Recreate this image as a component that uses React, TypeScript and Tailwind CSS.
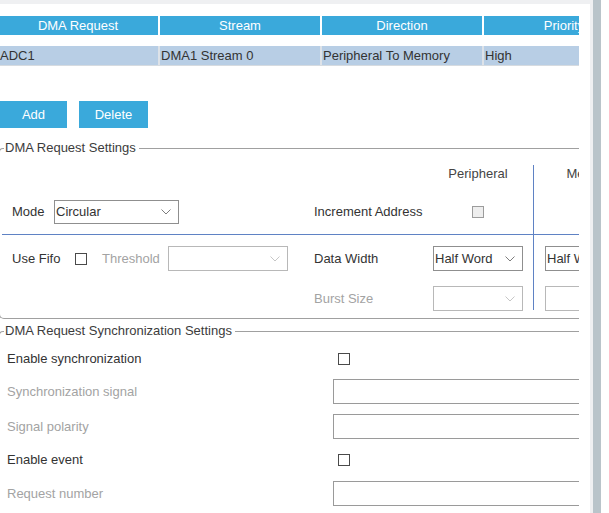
const headers = ["DMA Request", "Stream", "Direction", "Priority"];
const row = ["ADC1", "DMA1 Stream 0", "Peripheral To Memory", "High"];

function Chevron({ light }: { light?: boolean }) {
  return (
    <svg width="10" height="6" viewBox="0 0 10 6" className="shrink-0">
      <polyline points="0.5,0.5 5,5 9.5,0.5" fill="none" stroke={light ? "#c6c6c6" : "#7d7d7d"} strokeWidth="1" />
    </svg>
  );
}

function Select({ value, className, disabled }: { value?: string; className: string; disabled?: boolean }) {
  return (
    <div
      className={`flex shrink-0 items-center justify-between bg-white pl-px pr-[7px] border ${
        disabled ? "border-[#b8b8b8]" : "border-[#8f8f8f]"
      } ${className}`}
    >
      <span className="whitespace-nowrap text-[#333]">{value}</span>
      <Chevron light={disabled} />
    </div>
  );
}

function Check({ disabled }: { disabled?: boolean }) {
  return (
    <div
      className={`h-[12px] w-[12px] shrink-0 border ${
        disabled ? "border-[#9c9c9c] bg-[#eeeeee]" : "border-[#4a4a4a] bg-white"
      }`}
    />
  );
}

function Legend({ title }: { title: string }) {
  return (
    <div className="flex h-[16px] w-[600px]">
      <div className="ml-[-1px] h-[8px] w-[5px] self-end rounded-tl-[4px] border-l border-t border-[#a0a0a0]" />
      <span className="ml-px self-center whitespace-nowrap text-[#3c3c3c]">{title}</span>
      <div className="ml-[3px] mt-[8px] h-px flex-1 bg-[#a0a0a0]" />
    </div>
  );
}

function SyncRow({ label, muted, kind, className }: { label: string; muted?: boolean; kind: "check" | "input"; className?: string }) {
  return (
    <div className={`flex h-[25px] items-center ${className ?? ""}`}>
      <div className={`w-[333px] shrink-0 pl-[7px] ${muted ? "text-[#a3a3a3]" : "text-[#333]"}`}>{label}</div>
      {kind === "check" ? (
        <div className="ml-[5px]">
          <Check />
        </div>
      ) : (
        <div className="h-[25px] w-[260px] shrink-0 border border-[#9a9a9a] bg-white" />
      )}
    </div>
  );
}

export default function App() {
  return (
    <div className="flex h-[513px] w-[609px] overflow-hidden bg-white font-['Liberation_Sans',Arial,sans-serif] text-[13px] leading-[16px] text-[#333]">
      <div className="flex w-[590px] shrink-0 flex-col">
        <div className="h-[4px] bg-[#eff0f2]" />
        <div className="w-[579px] flex-1 overflow-hidden">
          {/* table */}
          <div className="ml-[-2px] mt-[12px] flex w-[650px] gap-[2px]">
            {headers.map((h) => (
              <div key={h} className="flex h-[19px] w-[160px] shrink-0 items-center justify-center whitespace-nowrap bg-[#3aa9db] text-white">
                {h}
              </div>
            ))}
          </div>
          <div className="ml-[-2px] mt-[11px] flex w-[650px] gap-[2px] border-b border-[#d6dbe0] bg-[#dde2e8]">
            {row.map((c, i) => (
              <div key={c} className={`flex h-[19px] w-[160px] shrink-0 items-center bg-[#b8cee5] text-[#333] ${i === 0 ? "pl-[2px]" : "pl-px"}`}>
                {c}
              </div>
            ))}
          </div>

          <div className="mt-[35px] flex gap-[12px]">
            <button className="flex h-[27px] w-[67px] items-center justify-center bg-[#3aa9db] text-white">Add</button>
            <button className="flex h-[27px] w-[69px] items-center justify-center bg-[#3aa9db] text-white">Delete</button>
          </div>

          {/* DMA Request Settings */}
          <div className="mt-[12px]">
            <Legend title="DMA Request Settings" />
          </div>
          <div className="ml-[-1px] w-[600px] rounded-bl-[5px] border-b border-l border-[#a0a0a0]">
            <div className="flex h-[78px]">
              <div className="flex w-[300px] shrink-0 pl-[12px] pt-[44px]">
                <div className="flex h-[24px] items-center">
                  <span className="w-[42px]">Mode</span>
                  <Select value="Circular" className="h-[24px] w-[125px]" />
                </div>
              </div>
              <div className="w-[133px] shrink-0 pl-[14px] pt-[44px]">
                <div className="flex h-[24px] items-center whitespace-nowrap">Increment Address</div>
              </div>
              <div className="w-[90px] shrink-0 pt-[6px]">
                <div className="flex h-[24px] items-center justify-center text-[#444]">Peripheral</div>
                <div className="mt-[14px] flex h-[24px] items-center justify-center">
                  <Check disabled />
                </div>
              </div>
              <div className="w-[10px] shrink-0" />
              <div className="mt-[9px] w-px shrink-0 bg-[#5f82c4]" />
              <div className="w-[11px] shrink-0" />
              <div className="w-[90px] shrink-0 pt-[6px]">
                <div className="flex h-[24px] items-center justify-center text-[#444]">Memory</div>
              </div>
            </div>
            <div className="ml-[2px] h-px bg-[#5f82c4]" />
            <div className="flex h-[83px]">
              <div className="w-[300px] shrink-0 pl-[12px] pt-[11px]">
                <div className="flex h-[25px] items-center">
                  <span className="w-[63px] shrink-0">Use Fifo</span>
                  <Check />
                  <span className="ml-[15px] w-[66px] shrink-0 text-[#a3a3a3]">Threshold</span>
                  <Select disabled className="h-[25px] w-[120px]" />
                </div>
              </div>
              <div className="w-[133px] shrink-0 pl-[14px] pt-[11px]">
                <div className="flex h-[25px] items-center">Data Width</div>
                <div className="mt-[15px] flex h-[25px] items-center text-[#a3a3a3]">Burst Size</div>
              </div>
              <div className="w-[90px] shrink-0 pt-[11px]">
                <Select value="Half Word" className="h-[25px] w-[90px]" />
                <Select disabled className="mt-[15px] h-[25px] w-[90px]" />
              </div>
              <div className="w-[10px] shrink-0" />
              <div className="h-[75px] w-px shrink-0 bg-[#5f82c4]" />
              <div className="w-[11px] shrink-0" />
              <div className="w-[90px] shrink-0 pt-[11px]">
                <Select value="Half Word" className="h-[25px] w-[90px]" />
                <Select disabled className="mt-[15px] h-[25px] w-[90px]" />
              </div>
            </div>
          </div>

          {/* DMA Request Synchronization Settings */}
          <div className="mt-[4px]">
            <Legend title="DMA Request Synchronization Settings" />
          </div>
          <div className="ml-[-1px] w-[600px] border-l border-[#a0a0a0] pt-[7px]">
            <SyncRow label="Enable synchronization" kind="check" />
            <SyncRow label="Synchronization signal" muted kind="input" className="mt-[8px]" />
            <SyncRow label="Signal polarity" muted kind="input" className="mt-[10px]" />
            <SyncRow label="Enable event" kind="check" className="mt-[8px]" />
            <SyncRow label="Request number" muted kind="input" className="mt-[9px]" />
          </div>
        </div>
      </div>
      <div className="w-[3px] shrink-0 bg-[#eff0f2]" />
      <div className="w-[8px] shrink-0 bg-[#b9c4ca]" />
      <div className="w-[8px] shrink-0 bg-white" />
    </div>
  );
}
